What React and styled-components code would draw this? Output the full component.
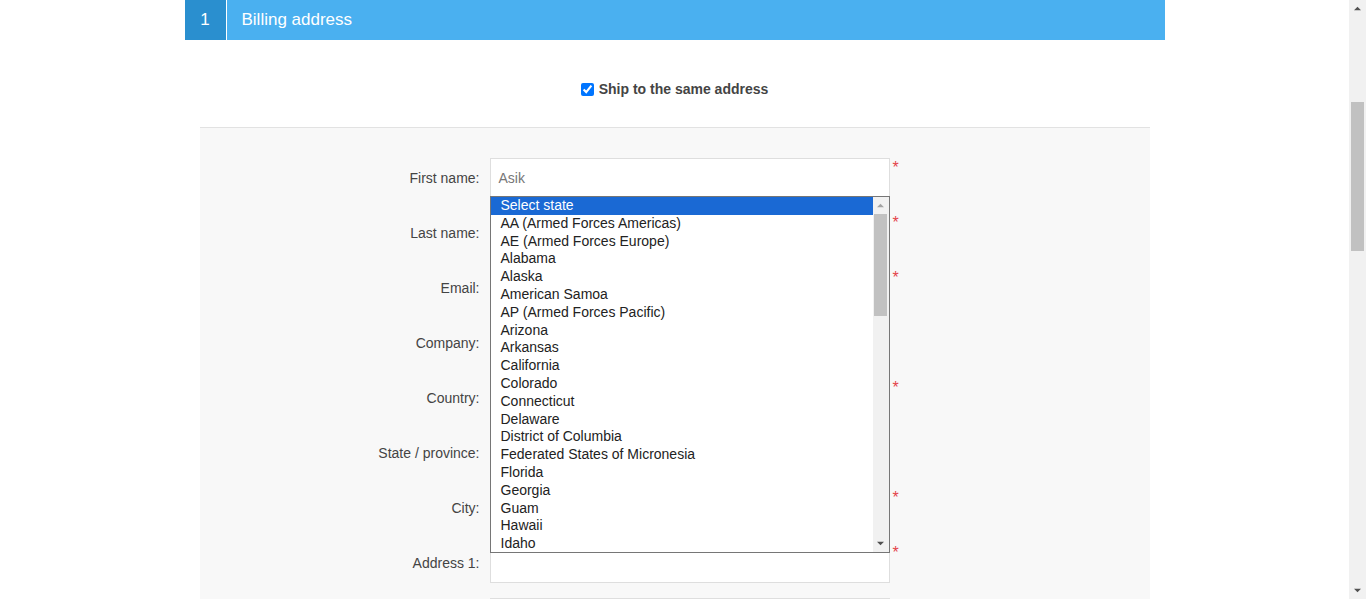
import React from "react";
import styled, { createGlobalStyle } from "styled-components";

const Global = createGlobalStyle`
  html, body { margin: 0; padding: 0; height: 100%; overflow: hidden; background: #fff; }
  body { font-family: "Liberation Sans", Arial, sans-serif; }
  #root { height: 100%; }
`;

const Page = styled.div`
  display: flex;
  height: 599px;
  width: 1366px;
`;

const Main = styled.div`
  flex: 1;
  display: flex;
  justify-content: center;
  overflow: hidden;
`;

const Container = styled.div`
  width: 980px;
  display: flex;
  flex-direction: column;
  flex-shrink: 0;
`;

const StepHeader = styled.div`
  display: flex;
  flex-shrink: 0;
  height: 40px;
  background: #4ab0f0;
  color: #fff;
  font-size: 17px;
`;

const StepNumber = styled.div`
  width: 41px;
  background: #2a8fcf;
  border-right: 1px solid #fff;
  display: flex;
  align-items: center;
  justify-content: center;
`;

const StepTitle = styled.div`
  display: flex;
  align-items: center;
  padding-left: 15px;
`;

const ShipRow = styled.label`
  display: flex;
  flex-shrink: 0;
  align-items: center;
  justify-content: center;
  gap: 5px;
  padding: 41px 0 30px;
  font-size: 14px;
  font-weight: bold;
  color: #444;
  line-height: 16px;
`;

const Check = styled.input`
  margin: 0;
  width: 13px;
  height: 13px;
  accent-color: #0075ff;
`;

const Panel = styled.div`
  position: relative;
  flex-shrink: 0;
  margin: 0 15px;
  background: #f8f8f8;
  border-top: 1px solid #e2e2e2;
  padding: 30px 0 40px;
  display: flex;
  flex-direction: column;
  gap: 15px;
`;

const Row = styled.div`
  display: grid;
  grid-template-columns: 280px 400px 20px;
  column-gap: 10px;
  align-items: center;
`;

const Label = styled.div`
  text-align: right;
  font-size: 14px;
  color: #444;
`;

const Input = styled.div`
  height: 40px;
  box-sizing: border-box;
  background: #fff;
  border: 1px solid #dedede;
  display: flex;
  align-items: center;
  padding-left: 8px;
  font-size: 14px;
  color: #777;
`;

const Req = styled.span`
  align-self: start;
  margin-left: -7px;
  margin-top: 2px;
  color: #e4434b;
  font-size: 16px;
  line-height: 16px;
`;

const Popup = styled.div`
  position: absolute;
  top: 68px;
  left: 290px;
  width: 400px;
  height: 357px;
  box-sizing: border-box;
  border: 1px solid #767676;
  background: #fff;
  display: flex;
`;

const List = styled.div`
  flex: 1;
  overflow: hidden;
`;

const Option = styled.div`
  height: 17.8px;
  line-height: 17.8px;
  padding-left: 10px;
  font-size: 14px;
  color: ${(p) => (p.$sel ? "#fff" : "#222")};
  background: ${(p) => (p.$sel ? "#1a69d4" : "transparent")};
  white-space: nowrap;
`;

const VScroll = styled.div`
  width: ${(p) => p.$w}px;
  flex-shrink: 0;
  background: #f1f1f1;
  display: flex;
  flex-direction: column;
  align-items: center;
`;

const Arrow = styled.div`
  height: ${(p) => p.$h}px;
  width: 100%;
  display: flex;
  align-items: center;
  justify-content: center;
`;

const Thumb = styled.div`
  width: ${(p) => p.$w}px;
  height: ${(p) => p.$h}px;
  margin-top: ${(p) => p.$top}px;
  background: ${(p) => p.$c};
`;

const Spacer = styled.div`
  flex: 1;
`;

const Tri = ({ up, color, size = 7 }) => (
  <svg width={size} height={Math.ceil(size / 2) + 1} viewBox="0 0 8 4">
    <path d={up ? "M0 4 L4 0 L8 4 Z" : "M0 0 L8 0 L4 4 Z"} fill={color} />
  </svg>
);

const states = [
  "Select state",
  "AA (Armed Forces Americas)",
  "AE (Armed Forces Europe)",
  "Alabama",
  "Alaska",
  "American Samoa",
  "AP (Armed Forces Pacific)",
  "Arizona",
  "Arkansas",
  "California",
  "Colorado",
  "Connecticut",
  "Delaware",
  "District of Columbia",
  "Federated States of Micronesia",
  "Florida",
  "Georgia",
  "Guam",
  "Hawaii",
  "Idaho",
];

const fields = [
  { id: "fn", label: "First name:", value: "Asik", req: true },
  { id: "ln", label: "Last name:", req: true },
  { id: "em", label: "Email:", req: true },
  { id: "co", label: "Company:" },
  { id: "cn", label: "Country:", req: true },
  { id: "st", label: "State / province:" },
  { id: "ci", label: "City:", req: true },
  { id: "a1", label: "Address 1:", req: true },
  { id: "a2", label: "" },
];

export default function App() {
  return (
    <>
      <Global />
      <Page>
        <Main>
          <Container>
            <StepHeader>
              <StepNumber>1</StepNumber>
              <StepTitle>Billing address</StepTitle>
            </StepHeader>
            <ShipRow>
              <Check type="checkbox" defaultChecked />
              Ship to the same address
            </ShipRow>
            <Panel>
              {fields.map((f) => (
                <Row key={f.id}>
                  <Label>{f.label}</Label>
                  <Input>{f.value || ""}</Input>
                  {f.req ? <Req>*</Req> : <span />}
                </Row>
              ))}
              <Popup>
                <List>
                  {states.map((s, i) => (
                    <Option key={s} $sel={i === 0}>
                      {s}
                    </Option>
                  ))}
                </List>
                <VScroll $w={16}>
                  <Arrow $h={17}>
                    <Tri up color="#a3a3a3" />
                  </Arrow>
                  <Thumb $w={13} $h={102} $top={0} $c="#c1c1c1" />
                  <Spacer />
                  <Arrow $h={17}>
                    <Tri color="#505050" />
                  </Arrow>
                </VScroll>
              </Popup>
            </Panel>
          </Container>
        </Main>
        <VScroll $w={17}>
          <Arrow $h={17}>
            <Tri up color="#505050" />
          </Arrow>
          <Thumb $w={13} $h={149} $top={85} $c="#c1c1c1" />
          <Spacer />
          <Arrow $h={17}>
            <Tri color="#505050" />
          </Arrow>
        </VScroll>
      </Page>
    </>
  );
}
